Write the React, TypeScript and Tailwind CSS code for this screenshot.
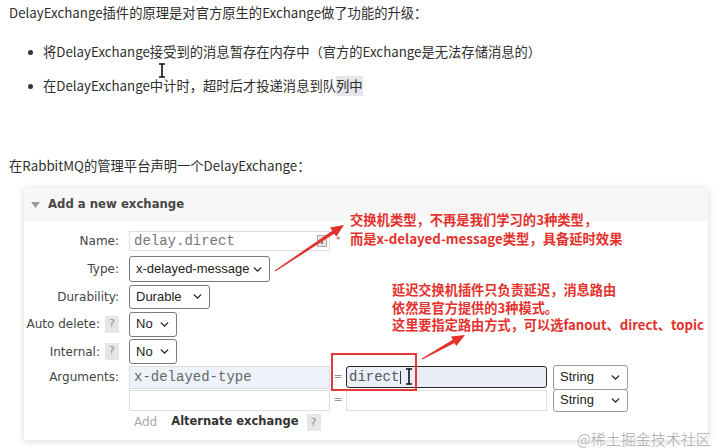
import React from 'react';
import { ChevronDown } from 'lucide-react';

const Chevron = () => <ChevronDown className="w-[13px] h-[13px] text-[#222]" strokeWidth={2.6} />;

const Badge = () => (
  <span className="inline-flex w-[14px] h-[17px] items-center justify-center bg-[#e6e6e6] text-[11px] text-[#8a8a8a]">?</span>
);

// tapered arrow like a screenshot annotation tool
const arrowPoints = (tx: number, ty: number, hx: number, hy: number) => {
  const dx = hx - tx;
  const dy = hy - ty;
  const len = Math.hypot(dx, dy);
  const ux = dx / len;
  const uy = dy / len;
  const nx = -uy;
  const ny = ux;
  const bx = hx - ux * 13;
  const by = hy - uy * 13;
  const p = (x: number, y: number) => `${x.toFixed(1)},${y.toFixed(1)}`;
  return [
    p(tx + nx * 0.6, ty + ny * 0.6),
    p(bx + nx * 1.8, by + ny * 1.8),
    p(bx + nx * 5.5, by + ny * 5.5),
    p(hx, hy),
    p(bx - nx * 5.5, by - ny * 5.5),
    p(bx - nx * 1.8, by - ny * 1.8),
    p(tx - nx * 0.6, ty - ny * 0.6),
  ].join(' ');
};

const IBeam = ({ x, y, h }: { x: number; y: number; h: number }) => (
  <g stroke="#111" strokeWidth="1.6" fill="none">
    <path d={`M${x - 3} ${y} H${x + 3} M${x} ${y} V${y + h} M${x - 3} ${y + h} H${x + 3}`} />
  </g>
);

const App: React.FC = () => {
  return (
    <div className="relative w-[718px] h-[448px] overflow-hidden bg-white px-[9px] font-['Noto_Sans_CJK_SC',sans-serif] text-[13.3px] text-[#2e2e2e]">
      <p className="h-[26px] leading-[26px]">DelayExchange插件的原理是对官方原生的Exchange做了功能的升级：</p>

      <ul className="mt-[13px] flex flex-col gap-[8px]">
        <li className="flex h-[26px] items-center">
          <span className="ml-[19px] mr-[10px] h-[5px] w-[5px] rounded-full bg-[#333]" />
          将DelayExchange接受到的消息暂存在内存中（官方的Exchange是无法存储消息的）
        </li>
        <li className="flex h-[26px] items-center">
          <span className="ml-[19px] mr-[10px] h-[5px] w-[5px] rounded-full bg-[#333]" />
          在DelayExchange中计时，超时后才投递消息到队<span className="bg-[#e4e6ea]">列中</span>
        </li>
      </ul>

      <p className="mt-[54px] h-[26px] leading-[26px]">在RabbitMQ的管理平台声明一个DelayExchange：</p>

      <section className="ml-[15px] mt-[9px] w-[684px] bg-white shadow-[0_1px_7px_rgba(0,0,0,0.16)] font-['DejaVu_Sans',sans-serif] text-[12px] text-[#444]">
        <div className="flex h-[33px] items-center bg-[#f7f7f7] pl-[7px]">
          <svg width="9" height="6" viewBox="0 0 9 6" className="mr-[8px]">
            <path d="M0 0 H9 L4.5 6 Z" fill="#9a9a9a" />
          </svg>
          <span className="font-bold text-[11.7px] text-[#474747]">Add a new exchange</span>
        </div>

        <div className="pt-[6px] pb-[7px]">
          {/* Name */}
          <div className="flex h-[28px] items-center">
            <div className="w-[96px] pr-[1px] text-right">Name:</div>
            <div className="ml-[9px] flex h-[20px] w-[201px] items-center justify-between border border-[#dedede] pl-[4px] pr-[2px] font-['Liberation_Mono',monospace] text-[14px] text-[#777]">
              delay.direct
              <span className="flex h-[12px] w-[10px] items-end justify-center border border-[#aaa] bg-[#e5e5e5]">
                <span className="mb-[2px] h-[5px] w-[2px] bg-[#888]" />
              </span>
            </div>
            <span className="ml-[6px] text-[9px] text-[#e03a3a]">*</span>
          </div>

          {/* Type */}
          <div className="flex h-[28px] items-center">
            <div className="w-[96px] pr-[1px] text-right">Type:</div>
            <div className="ml-[9px] flex h-[26px] w-[141px] items-center justify-between rounded-[3px] border border-[#7a7a7a] pl-[6px] pr-[5px] font-['Liberation_Sans',sans-serif] text-[13px] text-[#222]">
              x-delayed-message
              <Chevron />
            </div>
          </div>

          {/* Durability */}
          <div className="flex h-[27px] items-center">
            <div className="w-[96px] pr-[1px] text-right">Durability:</div>
            <div className="ml-[9px] flex h-[24px] w-[81px] items-center justify-between rounded-[3px] border border-[#7a7a7a] pl-[6px] pr-[5px] font-['Liberation_Sans',sans-serif] text-[13px] text-[#222]">
              Durable
              <Chevron />
            </div>
          </div>

          {/* Auto delete */}
          <div className="flex h-[28px] items-center">
            <div className="flex w-[96px] items-center justify-end gap-[5px] pr-[1px]">
              Auto delete: <Badge />
            </div>
            <div className="ml-[9px] flex h-[25px] w-[48px] items-center justify-between rounded-[3px] border border-[#7a7a7a] pl-[6px] pr-[5px] font-['Liberation_Sans',sans-serif] text-[13px] text-[#222]">
              No
              <Chevron />
            </div>
          </div>

          {/* Internal */}
          <div className="flex h-[27px] items-center">
            <div className="flex w-[96px] items-center justify-end gap-[5px] pr-[1px]">
              Internal: <Badge />
            </div>
            <div className="ml-[9px] flex h-[25px] w-[48px] items-center justify-between rounded-[3px] border border-[#7a7a7a] pl-[6px] pr-[5px] font-['Liberation_Sans',sans-serif] text-[13px] text-[#222]">
              No
              <Chevron />
            </div>
          </div>

          {/* Arguments */}
          <div className="flex h-[24px] items-center">
            <div className="w-[96px] pr-[1px] text-right">Arguments:</div>
            <div className="ml-[9px] flex h-[23px] w-[201px] items-center border border-[#dedede] bg-[#edf2fb] pl-[4px] font-['Liberation_Mono',monospace] text-[14px] text-[#666]">
              x-delayed-type
            </div>
            <span className="w-[16px] text-center text-[11px] text-[#999]">=</span>
            <div className="flex h-[22px] w-[201px] items-center rounded-[3px] border-[1.5px] border-[#2a2a2a] bg-[#e9eef9] pl-[2px] font-['Liberation_Mono',monospace] text-[14px] text-[#555]">
              direct
              <span className="ml-[1px] h-[13px] w-[1px] bg-[#333]" />
            </div>
            <div className="ml-[6px] flex h-[25px] w-[75px] items-center justify-between rounded-[3px] border border-[#9a9a9a] pl-[6px] pr-[5px] font-['Liberation_Sans',sans-serif] text-[13px] text-[#222]">
              String
              <Chevron />
            </div>
          </div>

          <div className="flex h-[22px] items-center">
            <div className="w-[96px]" />
            <div className="ml-[9px] h-[21px] w-[201px] border border-[#dedede]" />
            <span className="w-[16px] text-center text-[11px] text-[#999]">=</span>
            <div className="h-[21px] w-[201px] border border-[#dedede]" />
            <div className="ml-[6px] flex h-[23px] w-[75px] items-center justify-between rounded-[3px] border border-[#9a9a9a] pl-[6px] pr-[5px] font-['Liberation_Sans',sans-serif] text-[13px] text-[#222]">
              String
              <Chevron />
            </div>
          </div>

          <div className="flex h-[22px] items-center">
            <div className="w-[96px]" />
            <span className="ml-[14px] text-[#aaa]">Add</span>
            <span className="ml-[14px] font-bold text-[11.5px] text-[#333]">Alternate exchange</span>
            <span className="ml-[8px]"><Badge /></span>
          </div>
        </div>
      </section>

      {/* annotation: red box round the value field */}
      <div className="absolute left-[331px] top-[353px] h-[38px] w-[86px] border-2 border-[#e23a36]" />

      {/* annotation texts */}
      <div className="absolute left-[350px] top-[210px] font-bold text-[13.3px] leading-[19px] text-[#e4312d]">
        <p>交换机类型，不再是我们学习的3种类型，</p>
        <p>而是x-delayed-message类型，具备延时效果</p>
      </div>
      <div className="absolute left-[392px] top-[281px] font-bold text-[13.2px] leading-[17.5px] text-[#e4312d]">
        <p>延迟交换机插件只负责延迟，消息路由</p>
        <p>依然是官方提供的3种模式。</p>
        <p>这里要指定路由方式，可以选fanout、direct、topic</p>
      </div>

      <svg className="pointer-events-none absolute left-0 top-0" width="718" height="448">
        <polygon points={arrowPoints(275, 271, 344, 225)} fill="#e4312d" />
        <polygon points={arrowPoints(422, 359, 465, 335)} fill="#e4312d" />
        <IBeam x={162} y={64} h={13} />
        <IBeam x={409} y={369} h={15} />
      </svg>

      <span className="absolute left-[577px] top-[428px] text-[15px] font-light text-[#a8a8a8] [text-shadow:0_0_2px_#fff]">
        @稀土掘金技术社区
      </span>
    </div>
  );
};

export default App;
